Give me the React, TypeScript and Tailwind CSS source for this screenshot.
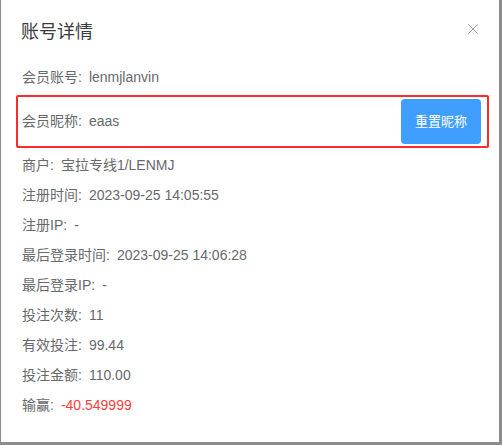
import { X } from "lucide-react"

const rows: { label: string; value: string; red?: boolean }[] = [
  { label: "商户", value: "宝拉专线1/LENMJ" },
  { label: "注册时间", value: "2023-09-25 14:05:55" },
  { label: "注册IP", value: "-" },
  { label: "最后登录时间", value: "2023-09-25 14:06:28" },
  { label: "最后登录IP", value: "-" },
  { label: "投注次数", value: "11" },
  { label: "有效投注", value: "99.44" },
  { label: "投注金额", value: "110.00" },
  { label: "输赢", value: "-40.549999", red: true },
]

function Row({ label, value, red }: { label: string; value: string; red?: boolean }) {
  return (
    <div className="h-[30px] flex items-center">
      <span>{label}:</span>
      <span className={"ml-[7px] " + (red ? "text-[#ff4040]" : "")}>{value}</span>
    </div>
  )
}

export default function App() {
  return (
    <div
      className="w-[502px] h-[445px] bg-[#8c8c8c] overflow-hidden"
      style={{ fontFamily: '"Liberation Sans", "Noto Sans CJK SC", sans-serif' }}
    >
      <div className="ml-[1px] w-[498px] h-[442px] bg-white">
        <div className="pt-[20px] px-[20px] flex items-center justify-between">
          <h2 className="text-[18px] leading-[24px] text-[#3a3b3e]">账号详情</h2>
          <button className="text-[#909399] mr-[-3px] mt-[-6px]">
            <X size={18} strokeWidth={1.2} />
          </button>
        </div>
        <div className="mt-[18px] px-[21px] text-[14px] text-[#67696d]">
          <Row label="会员账号" value="lenmjlanvin" />
          <div className="mt-[3px] mb-[2px] ml-[-6px] mr-[-11px] h-[53px] border-2 border-[#ff2a2a] rounded-[2px] pl-[4px] pr-[6px] flex items-center justify-between">
            <div className="flex items-center">
              <span>会员昵称:</span>
              <span className="ml-[7px]">eaas</span>
            </div>
            <button className="w-[80px] h-[45px] bg-[#409eff] text-white rounded-[4px] text-[13px]">
              重置昵称
            </button>
          </div>
          {rows.map((r) => (
            <Row key={r.label} {...r} />
          ))}
        </div>
      </div>
    </div>
  )
}
